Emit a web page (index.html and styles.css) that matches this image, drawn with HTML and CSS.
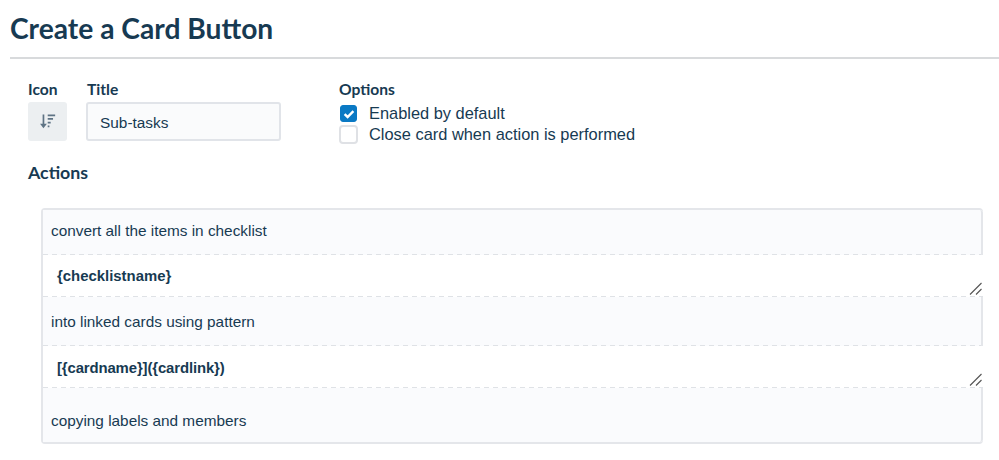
FILE: index.html
```html
<!DOCTYPE html>
<html lang="en">
<head>
<meta charset="utf-8">
<title>Create a Card Button</title>
<link rel="stylesheet" href="styles.css">
</head>
<body>
<h1 class="page-title">Create a Card Button</h1>
<main class="form">
  <div class="top-row">
    <div class="field icon-field">
      <div class="label">Icon</div>
      <button class="icon-btn" type="button" aria-label="Icon">
        <svg width="17" height="17" viewBox="0 0 16 16" fill="none">
          <path d="M4.2 1.4V12.4" stroke="#5e7384" stroke-width="1.6"/>
          <path d="M1 10.2L4.2 14.4L7.4 10.2Z" fill="#5e7384"/>
          <path d="M8.2 2.2H15.2M8.2 5.6H13.2M8.2 9H11M8.2 12.6H9.8" stroke="#5e7384" stroke-width="1.6"/>
        </svg>
      </button>
    </div>
    <div class="field title-field">
      <label class="label label-title" for="title">Title</label>
      <input id="title" class="title-input" type="text" value="Sub-tasks">
    </div>
    <div class="field options-field">
      <div class="label">Options</div>
      <div class="check-row">
        <span class="box box-on">
          <svg width="14" height="14" viewBox="0 0 14 14" fill="none"><path d="M2.6 7.2L5.6 10L11.4 4.2" stroke="#fff" stroke-width="2.4"/></svg>
        </span>
        <span>Enabled by default</span>
      </div>
      <div class="check-row">
        <span class="box"></span>
        <span>Close card when action is performed</span>
      </div>
    </div>
  </div>
  <h2 class="actions-title">Actions</h2>
  <div class="actions">
    <div class="seg seg-1">convert all the items in checklist</div>
    <div class="param param-1">{checklistname}
      <svg class="grip" width="13" height="13" viewBox="0 0 13 13" fill="none"><path d="M1 12.5L12.5 1M7 12.5L12.5 7" stroke="#555" stroke-width="1.1"/></svg>
    </div>
    <div class="seg seg-2">into linked cards using pattern</div>
    <div class="param param-2">[{cardname}]({cardlink})
      <svg class="grip" width="13" height="13" viewBox="0 0 13 13" fill="none"><path d="M1 12.5L12.5 1M7 12.5L12.5 7" stroke="#555" stroke-width="1.1"/></svg>
    </div>
    <div class="seg seg-3">copying labels and members</div>
  </div>
</main>
</body>
</html>
```
FILE: styles.css
```css
* { box-sizing: border-box; }
html, body { margin: 0; padding: 0; background: #fff; }
body {
  width: 999px;
  height: 460px;
  overflow: hidden;
  color: #173a52;
  font-family: "Liberation Sans", Arial, sans-serif;
}
.page-title {
  margin: 0 0 0 10px;
  height: 59px;
  padding-top: 11px;
  font: 700 28.2px/34px Lato, sans-serif;
  color: #173a52;
  border-bottom: 2px solid #d8dadc;
}
.form { padding: 20px 17px 0 28px; }
.top-row { display: flex; height: 82px; }
.label {
  display: block;
  font: 700 15.6px/20px Lato, sans-serif;
  color: #173a52;
}
.label-title { padding-left: 1px; }
.icon-field { width: 58px; }
.title-field { width: 253px; }
.icon-btn {
  display: flex;
  align-items: center;
  justify-content: center;
  width: 39px;
  height: 39px;
  margin-top: 3px;
  padding: 0;
  background: #eceff1;
  border: 0;
  border-radius: 3px;
}
.title-input {
  display: block;
  width: 195px;
  height: 39px;
  margin-top: 3px;
  padding: 2px 12px 0;
  background: #fafbfc;
  border: 2px solid #e1e4e9;
  border-radius: 3px;
  color: #173a52;
  font: 15.4px "Liberation Sans", Arial, sans-serif;
}
.check-row {
  display: flex;
  align-items: center;
  gap: 11px;
  height: 21px;
  font-size: 16.4px;
}
.options-field .label { margin-bottom: 4px; }
.box {
  display: flex;
  align-items: center;
  justify-content: center;
  width: 19px;
  height: 19px;
  background: #fff;
  border: 2px solid #dfe1e5;
  border-radius: 4px;
}
.box-on { background: #0a79c4; border-color: #0a79c4; width: 17px; height: 17px; margin: 0 1px; border-width: 1px; border-radius: 3px; }
.actions-title {
  margin: 0 0 25px;
  font: 700 17.8px/22px Lato, sans-serif;
  color: #173a52;
}
.actions {
  width: 942px;
  margin-left: 13px;
  border-top: 2px solid #e4e6ea;
  border-bottom: 2px solid #e4e6ea;
  border-left: 2px solid #e4e6ea;
  border-radius: 4px;
  font-size: 15.35px;
}
.seg {
  background-color: #fafbfd;
  border-right: 2px solid #e4e6ea;
  padding-left: 8px;
  display: flex;
  align-items: center;
}
.seg-1, .seg-2, .param {
  background-image: repeating-linear-gradient(90deg, #dfe2e6 0 5px, transparent 5px 9px);
  background-size: 100% 1.5px;
  background-position: 0 100%;
  background-repeat: no-repeat;
}
.seg-1 { height: 45px; padding-bottom: 3px; border-top-right-radius: 3px; }
.seg-2 { height: 49px; }
.seg-3 { height: 54px; padding-top: 12px; border-bottom-right-radius: 3px; }
.param {
  position: relative;
  height: 42px;
  padding: 11px 0 0 14px;
  background-color: #fff;
  font-weight: 700;
  font-size: 14.9px;
  line-height: 20px;
}
.param-2 { padding-top: 12px; letter-spacing: -0.12px; }
.grip { position: absolute; right: 1px; bottom: 2px; }
```
